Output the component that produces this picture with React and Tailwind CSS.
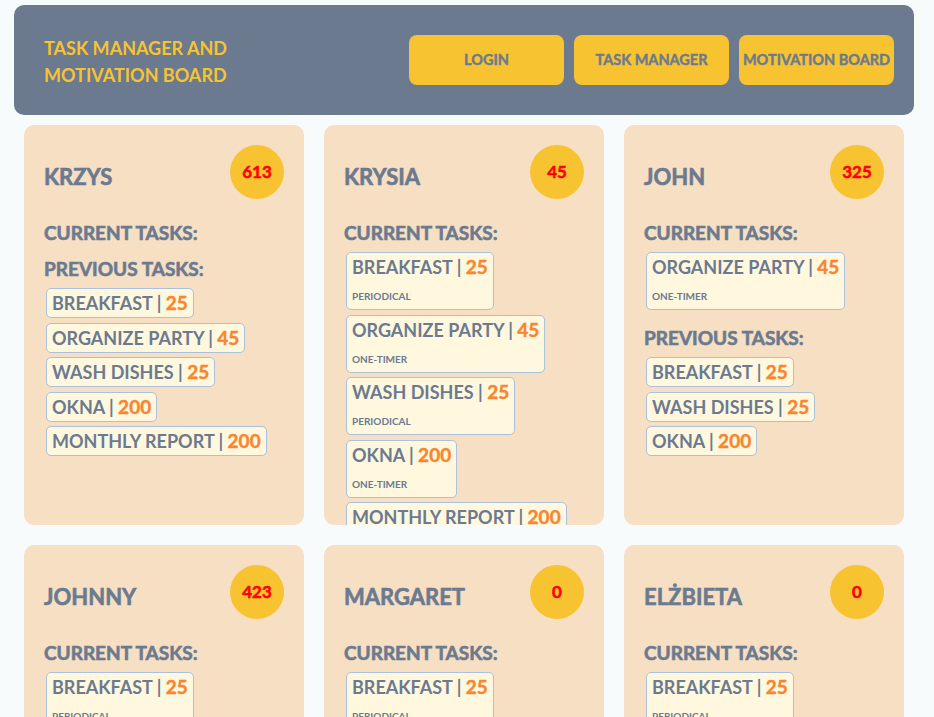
import React from "react";

const people = [
  {
    name: "KRZYS",
    points: 613,
    current: [],
    previous: [
      { t: "BREAKFAST", p: 25 },
      { t: "ORGANIZE PARTY", p: 45 },
      { t: "WASH DISHES", p: 25 },
      { t: "OKNA", p: 200 },
      { t: "MONTHLY REPORT", p: 200 },
    ],
  },
  {
    name: "KRYSIA",
    points: 45,
    current: [
      { t: "BREAKFAST", p: 25, k: "PERIODICAL" },
      { t: "ORGANIZE PARTY", p: 45, k: "ONE-TIMER" },
      { t: "WASH DISHES", p: 25, k: "PERIODICAL" },
      { t: "OKNA", p: 200, k: "ONE-TIMER" },
      { t: "MONTHLY REPORT", p: 200, k: "PERIODICAL" },
    ],
    previous: [],
  },
  {
    name: "JOHN",
    points: 325,
    current: [{ t: "ORGANIZE PARTY", p: 45, k: "ONE-TIMER" }],
    previous: [
      { t: "BREAKFAST", p: 25 },
      { t: "WASH DISHES", p: 25 },
      { t: "OKNA", p: 200 },
    ],
  },
  {
    name: "JOHNNY",
    points: 423,
    current: [{ t: "BREAKFAST", p: 25, k: "PERIODICAL" }],
    previous: [],
  },
  {
    name: "MARGARET",
    points: 0,
    current: [{ t: "BREAKFAST", p: 25, k: "PERIODICAL" }],
    previous: [],
  },
  {
    name: "ELŻBIETA",
    points: 0,
    current: [{ t: "BREAKFAST", p: 25, k: "PERIODICAL" }],
    previous: [],
  },
];

function Chip({ task }) {
  return (
    <div className="ml-[2px] self-start rounded-[5px] border border-[#a9c1dc] bg-[#fff8df] px-[5px] pt-[3px] pb-[3px]">
      <div className="h-[22px] text-[18px] leading-[22px] font-bold whitespace-nowrap text-[#6b7a8f]">
        {task.t} |{" "}
        <span className="text-[19px] font-bold text-[#f7862f] [-webkit-text-stroke:0.4px_#f7862f]">
          {task.p}
        </span>
      </div>
      {task.k && (
        <div className="mt-[11px] mb-[3px] text-[10px] leading-[14px] font-bold text-[#6b7a8f]">
          {task.k}
        </div>
      )}
    </div>
  );
}

function Section({ title, tasks, last }) {
  return (
    <div className="flex flex-col">
      <div className="mt-[6px] mb-[8px] h-[22px] text-[19px] leading-[22px] font-bold whitespace-nowrap text-[#6b7a8f] [-webkit-text-stroke:0.6px_#6b7a8f]">
        {title}
      </div>
      {tasks.length > 0 && (
        <div className={`flex flex-col gap-[4.5px] ${last ? "" : "pb-[11px]"}`}>
          {tasks.map((t, i) => (
            <Chip key={i} task={t} />
          ))}
        </div>
      )}
    </div>
  );
}

function Card({ person }) {
  return (
    <div className="h-[400px] overflow-hidden rounded-[10px] bg-[#f6dfc3] px-[20px] pt-[20px]">
      <div className="flex h-[54px] items-center justify-between">
        <div className="mt-[8px] text-[22px] font-bold text-[#6b7a8f] [-webkit-text-stroke:0.6px_#6b7a8f]">
          {person.name}
        </div>
        <div className="flex h-[54px] w-[54px] items-center justify-center rounded-full bg-[#f7c331] text-[17px] font-bold text-[#ff0000] [-webkit-text-stroke:0.5px_#ff0000]">
          {person.points}
        </div>
      </div>
      <div className="mt-[17px] flex flex-col">
        <Section title="CURRENT TASKS:" tasks={person.current} />
        <Section title="PREVIOUS TASKS:" tasks={person.previous} last />
      </div>
    </div>
  );
}

export default function App() {
  return (
    <div className="min-h-screen bg-[#f8fbfb] pt-[5px] font-['Lato',sans-serif]">
      <header className="ml-[14px] flex h-[110px] w-[900px] items-center justify-between rounded-[10px] bg-[#6b7a8f] pr-[20px] pl-[30px]">
        <div className="mt-[3px] text-[18px] leading-[27px] font-bold text-[#f7c331]">
          TASK MANAGER AND
          <br />
          MOTIVATION BOARD
        </div>
        <nav className="flex gap-[10px]">
          {["LOGIN", "TASK MANAGER", "MOTIVATION BOARD"].map((b) => (
            <button
              key={b}
              className="flex h-[50px] w-[155px] items-center justify-center rounded-[8px] bg-[#f7c331] text-[14.5px] font-bold whitespace-nowrap text-[#6b7a8f] [-webkit-text-stroke:0.4px_#6b7a8f]"
            >
              {b}
            </button>
          ))}
        </nav>
      </header>
      <main className="ml-[24px] mt-[10px] grid w-[880px] grid-cols-3 gap-[20px]">
        {people.map((p) => (
          <Card key={p.name} person={p} />
        ))}
      </main>
    </div>
  );
}
